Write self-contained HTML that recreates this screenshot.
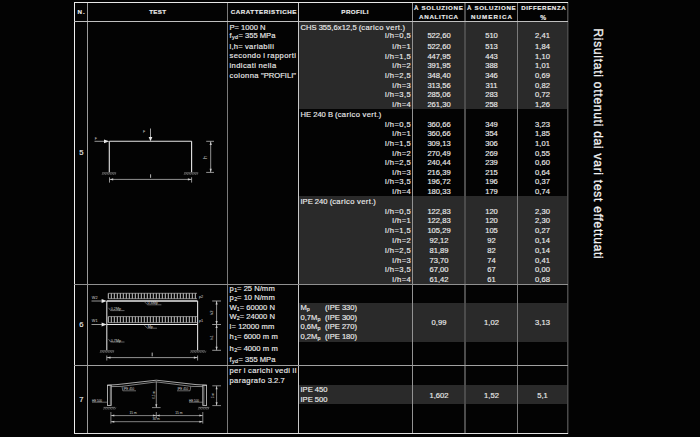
<!DOCTYPE html>
<html><head><meta charset="utf-8"><style>
html,body{margin:0;padding:0;}
body{width:700px;height:437px;background:#030303;position:relative;overflow:hidden;font-family:"Liberation Sans",sans-serif;color:#ececec;}
.t{position:absolute;white-space:nowrap;-webkit-text-stroke:0.15px #ececec;}
.lc{letter-spacing:0.4px;}
.t sub{font-size:70%;vertical-align:-0.25em;line-height:0;}
.band{position:absolute;background:#2a2a2a;}
.ln{position:absolute;}
svg{position:absolute;left:0;top:0;}
.rt{position:absolute;left:0;top:0;font-size:12px;line-height:12px;white-space:nowrap;color:#f4f4f4;transform-origin:0 0;}
</style></head><body>
<div class="band" style="left:299.0px;top:22.0px;width:268.0px;height:86.5px"></div><div class="band" style="left:299.0px;top:195.5px;width:268.0px;height:88.5px"></div><div class="band" style="left:299.0px;top:303.0px;width:268.0px;height:39.0px"></div><div class="band" style="left:299.0px;top:384.5px;width:268.0px;height:19.5px"></div>
<div class="ln" style="left:74px;top:2px;width:1px;height:432px;background:#eeeeee"></div><div class="ln" style="left:87px;top:2px;width:1px;height:432px;background:#9a9a9a"></div><div class="ln" style="left:227px;top:2px;width:1px;height:432px;background:#7a7a7a"></div><div class="ln" style="left:298px;top:2px;width:1px;height:432px;background:#c8c8c8"></div><div class="ln" style="left:412px;top:2px;width:1px;height:432px;background:#939393"></div><div class="ln" style="left:464px;top:2px;width:2px;height:432px;background:#4c4c4c"></div><div class="ln" style="left:517px;top:2px;width:1px;height:432px;background:#7a7a7a"></div><div class="ln" style="left:567px;top:2px;width:1px;height:432px;background:#4a4a4a"></div><div class="ln" style="left:568px;top:2px;width:1px;height:432px;background:#262626"></div><div class="ln" style="left:74px;top:2px;width:494px;height:1px;background:#e8e8e8"></div><div class="ln" style="left:74px;top:21px;width:494px;height:1px;background:#c0c0c0"></div><div class="ln" style="left:74px;top:284px;width:494px;height:1px;background:#909090"></div><div class="ln" style="left:74px;top:365px;width:494px;height:1px;background:#a0a0a0"></div><div class="ln" style="left:74px;top:433px;width:494px;height:1px;background:#e0e0e0"></div>
<svg width="700" height="437" viewBox="0 0 700 437"><line x1="109.3" y1="141.3" x2="191.6" y2="141.3" stroke="#e6e6e6" stroke-width="1.1" />
<line x1="109.3" y1="141.3" x2="109.3" y2="172.2" stroke="#e6e6e6" stroke-width="1.1" />
<line x1="191.6" y1="141.3" x2="191.6" y2="172.2" stroke="#e6e6e6" stroke-width="1.1" />
<line x1="102" y1="172.8" x2="116" y2="172.8" stroke="#808080" stroke-width="0.7" />
<line x1="102" y1="175.0" x2="103.2" y2="172.8" stroke="#808080" stroke-width="0.6" />
<line x1="103.6" y1="175.0" x2="104.8" y2="172.8" stroke="#808080" stroke-width="0.6" />
<line x1="105.19999999999999" y1="175.0" x2="106.39999999999999" y2="172.8" stroke="#808080" stroke-width="0.6" />
<line x1="106.79999999999998" y1="175.0" x2="107.99999999999999" y2="172.8" stroke="#808080" stroke-width="0.6" />
<line x1="108.39999999999998" y1="175.0" x2="109.59999999999998" y2="172.8" stroke="#808080" stroke-width="0.6" />
<line x1="109.99999999999997" y1="175.0" x2="111.19999999999997" y2="172.8" stroke="#808080" stroke-width="0.6" />
<line x1="111.59999999999997" y1="175.0" x2="112.79999999999997" y2="172.8" stroke="#808080" stroke-width="0.6" />
<line x1="113.19999999999996" y1="175.0" x2="114.39999999999996" y2="172.8" stroke="#808080" stroke-width="0.6" />
<line x1="114.79999999999995" y1="175.0" x2="115.99999999999996" y2="172.8" stroke="#808080" stroke-width="0.6" />
<line x1="184" y1="172.8" x2="198.2" y2="172.8" stroke="#808080" stroke-width="0.7" />
<line x1="184" y1="175.0" x2="185.2" y2="172.8" stroke="#808080" stroke-width="0.6" />
<line x1="185.6" y1="175.0" x2="186.79999999999998" y2="172.8" stroke="#808080" stroke-width="0.6" />
<line x1="187.2" y1="175.0" x2="188.39999999999998" y2="172.8" stroke="#808080" stroke-width="0.6" />
<line x1="188.79999999999998" y1="175.0" x2="189.99999999999997" y2="172.8" stroke="#808080" stroke-width="0.6" />
<line x1="190.39999999999998" y1="175.0" x2="191.59999999999997" y2="172.8" stroke="#808080" stroke-width="0.6" />
<line x1="191.99999999999997" y1="175.0" x2="193.19999999999996" y2="172.8" stroke="#808080" stroke-width="0.6" />
<line x1="193.59999999999997" y1="175.0" x2="194.79999999999995" y2="172.8" stroke="#808080" stroke-width="0.6" />
<line x1="195.19999999999996" y1="175.0" x2="196.39999999999995" y2="172.8" stroke="#808080" stroke-width="0.6" />
<line x1="196.79999999999995" y1="175.0" x2="197.99999999999994" y2="172.8" stroke="#808080" stroke-width="0.6" />
<line x1="94.5" y1="141.3" x2="104.5" y2="141.3" stroke="#a8a8a8" stroke-width="0.9" />
<polygon points="104,139.4 109.3,141.3 104,143.2" fill="#e8e8e8"/>
<text x="94.8" y="140.3" font-size="3.6" fill="#d8d8d8" font-family="Liberation Sans" text-anchor="start">F</text>
<line x1="150.5" y1="128.5" x2="150.5" y2="137.5" stroke="#b0b0b0" stroke-width="0.9" />
<polygon points="148.6,137 152.4,137 150.5,141.3" fill="#e8e8e8"/>
<text x="143" y="132.9" font-size="3.6" fill="#d8d8d8" font-family="Liberation Sans" text-anchor="start">F</text>
<line x1="210.7" y1="141.3" x2="210.7" y2="172.4" stroke="#b8b8b8" stroke-width="0.8" />
<line x1="206.2" y1="141.3" x2="214" y2="141.3" stroke="#b8b8b8" stroke-width="0.8" />
<line x1="206.2" y1="172.4" x2="214" y2="172.4" stroke="#b8b8b8" stroke-width="0.8" />
<polygon points="209.6,145 211.8,145 210.7,141.5" fill="#cfcfcf"/>
<polygon points="209.6,168.8 211.8,168.8 210.7,172.2" fill="#cfcfcf"/>
<text x="207.4" y="157.5" font-size="4.8" fill="#d8d8d8" font-family="Liberation Sans" text-anchor="middle" transform="rotate(-90 207.4 157.5)">h</text>
<line x1="109.5" y1="179.4" x2="191.6" y2="179.4" stroke="#b8b8b8" stroke-width="0.8" />
<line x1="109.5" y1="177.3" x2="109.5" y2="182.6" stroke="#b8b8b8" stroke-width="0.8" />
<line x1="191.6" y1="177.3" x2="191.6" y2="182.6" stroke="#b8b8b8" stroke-width="0.8" />
<polygon points="113.2,178.3 113.2,180.5 109.7,179.4" fill="#cfcfcf"/>
<polygon points="187.9,178.3 187.9,180.5 191.4,179.4" fill="#cfcfcf"/>
<line x1="150.6" y1="174.3" x2="150.6" y2="177.8" stroke="#c8c8c8" stroke-width="0.9" />
<line x1="108.3" y1="293.3" x2="197" y2="293.3" stroke="#b8b8b8" stroke-width="0.7" />
<line x1="108.3" y1="298.7" x2="197" y2="298.7" stroke="#b8b8b8" stroke-width="0.7" />
<line x1="108.3" y1="293.3" x2="108.3" y2="298.7" stroke="#c8c8c8" stroke-width="1.0" />
<line x1="111.3" y1="293.3" x2="111.3" y2="298.7" stroke="#c8c8c8" stroke-width="1.0" />
<line x1="114.3" y1="293.3" x2="114.3" y2="298.7" stroke="#c8c8c8" stroke-width="1.0" />
<line x1="117.3" y1="293.3" x2="117.3" y2="298.7" stroke="#c8c8c8" stroke-width="1.0" />
<line x1="120.3" y1="293.3" x2="120.3" y2="298.7" stroke="#c8c8c8" stroke-width="1.0" />
<line x1="123.3" y1="293.3" x2="123.3" y2="298.7" stroke="#c8c8c8" stroke-width="1.0" />
<line x1="126.3" y1="293.3" x2="126.3" y2="298.7" stroke="#c8c8c8" stroke-width="1.0" />
<line x1="129.3" y1="293.3" x2="129.3" y2="298.7" stroke="#c8c8c8" stroke-width="1.0" />
<line x1="132.3" y1="293.3" x2="132.3" y2="298.7" stroke="#c8c8c8" stroke-width="1.0" />
<line x1="135.3" y1="293.3" x2="135.3" y2="298.7" stroke="#c8c8c8" stroke-width="1.0" />
<line x1="138.3" y1="293.3" x2="138.3" y2="298.7" stroke="#c8c8c8" stroke-width="1.0" />
<line x1="141.3" y1="293.3" x2="141.3" y2="298.7" stroke="#c8c8c8" stroke-width="1.0" />
<line x1="144.3" y1="293.3" x2="144.3" y2="298.7" stroke="#c8c8c8" stroke-width="1.0" />
<line x1="147.3" y1="293.3" x2="147.3" y2="298.7" stroke="#c8c8c8" stroke-width="1.0" />
<line x1="150.3" y1="293.3" x2="150.3" y2="298.7" stroke="#c8c8c8" stroke-width="1.0" />
<line x1="153.3" y1="293.3" x2="153.3" y2="298.7" stroke="#c8c8c8" stroke-width="1.0" />
<line x1="156.3" y1="293.3" x2="156.3" y2="298.7" stroke="#c8c8c8" stroke-width="1.0" />
<line x1="159.3" y1="293.3" x2="159.3" y2="298.7" stroke="#c8c8c8" stroke-width="1.0" />
<line x1="162.3" y1="293.3" x2="162.3" y2="298.7" stroke="#c8c8c8" stroke-width="1.0" />
<line x1="165.3" y1="293.3" x2="165.3" y2="298.7" stroke="#c8c8c8" stroke-width="1.0" />
<line x1="168.3" y1="293.3" x2="168.3" y2="298.7" stroke="#c8c8c8" stroke-width="1.0" />
<line x1="171.3" y1="293.3" x2="171.3" y2="298.7" stroke="#c8c8c8" stroke-width="1.0" />
<line x1="174.3" y1="293.3" x2="174.3" y2="298.7" stroke="#c8c8c8" stroke-width="1.0" />
<line x1="177.3" y1="293.3" x2="177.3" y2="298.7" stroke="#c8c8c8" stroke-width="1.0" />
<line x1="180.3" y1="293.3" x2="180.3" y2="298.7" stroke="#c8c8c8" stroke-width="1.0" />
<line x1="183.3" y1="293.3" x2="183.3" y2="298.7" stroke="#c8c8c8" stroke-width="1.0" />
<line x1="186.3" y1="293.3" x2="186.3" y2="298.7" stroke="#c8c8c8" stroke-width="1.0" />
<line x1="189.3" y1="293.3" x2="189.3" y2="298.7" stroke="#c8c8c8" stroke-width="1.0" />
<line x1="192.3" y1="293.3" x2="192.3" y2="298.7" stroke="#c8c8c8" stroke-width="1.0" />
<line x1="195.3" y1="293.3" x2="195.3" y2="298.7" stroke="#c8c8c8" stroke-width="1.0" />
<line x1="108.3" y1="316.6" x2="197" y2="316.6" stroke="#b8b8b8" stroke-width="0.7" />
<line x1="108.3" y1="322.6" x2="197" y2="322.6" stroke="#b8b8b8" stroke-width="0.7" />
<line x1="108.3" y1="316.6" x2="108.3" y2="322.6" stroke="#c8c8c8" stroke-width="1.0" />
<line x1="111.3" y1="316.6" x2="111.3" y2="322.6" stroke="#c8c8c8" stroke-width="1.0" />
<line x1="114.3" y1="316.6" x2="114.3" y2="322.6" stroke="#c8c8c8" stroke-width="1.0" />
<line x1="117.3" y1="316.6" x2="117.3" y2="322.6" stroke="#c8c8c8" stroke-width="1.0" />
<line x1="120.3" y1="316.6" x2="120.3" y2="322.6" stroke="#c8c8c8" stroke-width="1.0" />
<line x1="123.3" y1="316.6" x2="123.3" y2="322.6" stroke="#c8c8c8" stroke-width="1.0" />
<line x1="126.3" y1="316.6" x2="126.3" y2="322.6" stroke="#c8c8c8" stroke-width="1.0" />
<line x1="129.3" y1="316.6" x2="129.3" y2="322.6" stroke="#c8c8c8" stroke-width="1.0" />
<line x1="132.3" y1="316.6" x2="132.3" y2="322.6" stroke="#c8c8c8" stroke-width="1.0" />
<line x1="135.3" y1="316.6" x2="135.3" y2="322.6" stroke="#c8c8c8" stroke-width="1.0" />
<line x1="138.3" y1="316.6" x2="138.3" y2="322.6" stroke="#c8c8c8" stroke-width="1.0" />
<line x1="141.3" y1="316.6" x2="141.3" y2="322.6" stroke="#c8c8c8" stroke-width="1.0" />
<line x1="144.3" y1="316.6" x2="144.3" y2="322.6" stroke="#c8c8c8" stroke-width="1.0" />
<line x1="147.3" y1="316.6" x2="147.3" y2="322.6" stroke="#c8c8c8" stroke-width="1.0" />
<line x1="150.3" y1="316.6" x2="150.3" y2="322.6" stroke="#c8c8c8" stroke-width="1.0" />
<line x1="153.3" y1="316.6" x2="153.3" y2="322.6" stroke="#c8c8c8" stroke-width="1.0" />
<line x1="156.3" y1="316.6" x2="156.3" y2="322.6" stroke="#c8c8c8" stroke-width="1.0" />
<line x1="159.3" y1="316.6" x2="159.3" y2="322.6" stroke="#c8c8c8" stroke-width="1.0" />
<line x1="162.3" y1="316.6" x2="162.3" y2="322.6" stroke="#c8c8c8" stroke-width="1.0" />
<line x1="165.3" y1="316.6" x2="165.3" y2="322.6" stroke="#c8c8c8" stroke-width="1.0" />
<line x1="168.3" y1="316.6" x2="168.3" y2="322.6" stroke="#c8c8c8" stroke-width="1.0" />
<line x1="171.3" y1="316.6" x2="171.3" y2="322.6" stroke="#c8c8c8" stroke-width="1.0" />
<line x1="174.3" y1="316.6" x2="174.3" y2="322.6" stroke="#c8c8c8" stroke-width="1.0" />
<line x1="177.3" y1="316.6" x2="177.3" y2="322.6" stroke="#c8c8c8" stroke-width="1.0" />
<line x1="180.3" y1="316.6" x2="180.3" y2="322.6" stroke="#c8c8c8" stroke-width="1.0" />
<line x1="183.3" y1="316.6" x2="183.3" y2="322.6" stroke="#c8c8c8" stroke-width="1.0" />
<line x1="186.3" y1="316.6" x2="186.3" y2="322.6" stroke="#c8c8c8" stroke-width="1.0" />
<line x1="189.3" y1="316.6" x2="189.3" y2="322.6" stroke="#c8c8c8" stroke-width="1.0" />
<line x1="192.3" y1="316.6" x2="192.3" y2="322.6" stroke="#c8c8c8" stroke-width="1.0" />
<line x1="195.3" y1="316.6" x2="195.3" y2="322.6" stroke="#c8c8c8" stroke-width="1.0" />
<line x1="106.8" y1="301" x2="197.6" y2="301" stroke="#eaeaea" stroke-width="1.3" />
<line x1="106.8" y1="324.5" x2="197.6" y2="324.5" stroke="#eaeaea" stroke-width="1.2" />
<line x1="106.8" y1="301" x2="106.8" y2="350.3" stroke="#dcdcdc" stroke-width="1.1" />
<line x1="197.6" y1="301" x2="197.6" y2="350.3" stroke="#dcdcdc" stroke-width="1.1" />
<line x1="100" y1="350.8" x2="114" y2="350.8" stroke="#808080" stroke-width="0.7" />
<line x1="100" y1="353.0" x2="101.2" y2="350.8" stroke="#808080" stroke-width="0.6" />
<line x1="101.6" y1="353.0" x2="102.8" y2="350.8" stroke="#808080" stroke-width="0.6" />
<line x1="103.19999999999999" y1="353.0" x2="104.39999999999999" y2="350.8" stroke="#808080" stroke-width="0.6" />
<line x1="104.79999999999998" y1="353.0" x2="105.99999999999999" y2="350.8" stroke="#808080" stroke-width="0.6" />
<line x1="106.39999999999998" y1="353.0" x2="107.59999999999998" y2="350.8" stroke="#808080" stroke-width="0.6" />
<line x1="107.99999999999997" y1="353.0" x2="109.19999999999997" y2="350.8" stroke="#808080" stroke-width="0.6" />
<line x1="109.59999999999997" y1="353.0" x2="110.79999999999997" y2="350.8" stroke="#808080" stroke-width="0.6" />
<line x1="111.19999999999996" y1="353.0" x2="112.39999999999996" y2="350.8" stroke="#808080" stroke-width="0.6" />
<line x1="112.79999999999995" y1="353.0" x2="113.99999999999996" y2="350.8" stroke="#808080" stroke-width="0.6" />
<line x1="190.5" y1="350.8" x2="205" y2="350.8" stroke="#808080" stroke-width="0.7" />
<line x1="190.5" y1="353.0" x2="191.7" y2="350.8" stroke="#808080" stroke-width="0.6" />
<line x1="192.1" y1="353.0" x2="193.29999999999998" y2="350.8" stroke="#808080" stroke-width="0.6" />
<line x1="193.7" y1="353.0" x2="194.89999999999998" y2="350.8" stroke="#808080" stroke-width="0.6" />
<line x1="195.29999999999998" y1="353.0" x2="196.49999999999997" y2="350.8" stroke="#808080" stroke-width="0.6" />
<line x1="196.89999999999998" y1="353.0" x2="198.09999999999997" y2="350.8" stroke="#808080" stroke-width="0.6" />
<line x1="198.49999999999997" y1="353.0" x2="199.69999999999996" y2="350.8" stroke="#808080" stroke-width="0.6" />
<line x1="200.09999999999997" y1="353.0" x2="201.29999999999995" y2="350.8" stroke="#808080" stroke-width="0.6" />
<line x1="201.69999999999996" y1="353.0" x2="202.89999999999995" y2="350.8" stroke="#808080" stroke-width="0.6" />
<line x1="203.29999999999995" y1="353.0" x2="204.49999999999994" y2="350.8" stroke="#808080" stroke-width="0.6" />
<line x1="204.89999999999995" y1="353.0" x2="206.09999999999994" y2="350.8" stroke="#808080" stroke-width="0.6" />
<line x1="91.5" y1="301" x2="102" y2="301" stroke="#a8a8a8" stroke-width="0.9" />
<polygon points="101.6,299 106.8,301 101.6,303" fill="#e8e8e8"/>
<text x="91.8" y="298.6" font-size="3.8" fill="#d8d8d8" font-family="Liberation Sans" text-anchor="start">W2</text>
<line x1="91.5" y1="324.5" x2="102" y2="324.5" stroke="#a8a8a8" stroke-width="0.9" />
<polygon points="101.6,322.5 106.8,324.5 101.6,326.5" fill="#e8e8e8"/>
<text x="91.8" y="322.1" font-size="3.8" fill="#d8d8d8" font-family="Liberation Sans" text-anchor="start">W1</text>
<text x="199" y="297.8" font-size="3.8" fill="#d8d8d8" font-family="Liberation Sans" text-anchor="start">p2</text>
<text x="199" y="321.6" font-size="3.8" fill="#d8d8d8" font-family="Liberation Sans" text-anchor="start">p1</text>
<line x1="108.5" y1="307.8" x2="110.6" y2="310.6" stroke="#a0a0a0" stroke-width="0.6" />
<line x1="110.6" y1="310.6" x2="124.5" y2="310.6" stroke="#a0a0a0" stroke-width="0.6" />
<text x="110.8" y="310.1" font-size="3.7" fill="#d8d8d8" font-family="Liberation Sans" text-anchor="start">0,2Mp</text>
<line x1="108.5" y1="339.2" x2="110.6" y2="342" stroke="#a0a0a0" stroke-width="0.6" />
<line x1="110.6" y1="342" x2="124.5" y2="342" stroke="#a0a0a0" stroke-width="0.6" />
<text x="110.8" y="341.5" font-size="3.7" fill="#d8d8d8" font-family="Liberation Sans" text-anchor="start">0,7Mp</text>
<line x1="144.3" y1="301.6" x2="147.5" y2="304.8" stroke="#a0a0a0" stroke-width="0.6" />
<line x1="147.5" y1="304.8" x2="161.4" y2="304.8" stroke="#a0a0a0" stroke-width="0.6" />
<text x="147.6" y="304.2" font-size="3.7" fill="#d8d8d8" font-family="Liberation Sans" text-anchor="start">0,6Mp</text>
<line x1="144.3" y1="325.2" x2="147.5" y2="328.2" stroke="#a0a0a0" stroke-width="0.6" />
<line x1="147.5" y1="328.2" x2="157" y2="328.2" stroke="#a0a0a0" stroke-width="0.6" />
<text x="147.8" y="327.7" font-size="3.7" fill="#d8d8d8" font-family="Liberation Sans" text-anchor="start">Mp</text>
<line x1="216.6" y1="301" x2="216.6" y2="350.3" stroke="#b8b8b8" stroke-width="0.8" />
<line x1="212.2" y1="301" x2="221" y2="301" stroke="#b8b8b8" stroke-width="0.8" />
<line x1="212.2" y1="324.5" x2="221" y2="324.5" stroke="#b8b8b8" stroke-width="0.8" />
<line x1="212.2" y1="350.3" x2="221" y2="350.3" stroke="#b8b8b8" stroke-width="0.8" />
<polygon points="215.5,304.6 217.7,304.6 216.6,301.2" fill="#cfcfcf"/>
<polygon points="215.5,320.9 217.7,320.9 216.6,324.3" fill="#cfcfcf"/>
<polygon points="215.5,328.1 217.7,328.1 216.6,324.7" fill="#cfcfcf"/>
<polygon points="215.5,346.7 217.7,346.7 216.6,350.1" fill="#cfcfcf"/>
<text x="213" y="312.8" font-size="4.0" fill="#d8d8d8" font-family="Liberation Sans" text-anchor="middle" transform="rotate(-90 213 312.8)">h2</text>
<text x="213" y="337.5" font-size="4.0" fill="#d8d8d8" font-family="Liberation Sans" text-anchor="middle" transform="rotate(-90 213 337.5)">h1</text>
<line x1="106.8" y1="357.6" x2="197.6" y2="357.6" stroke="#b8b8b8" stroke-width="0.8" />
<line x1="106.8" y1="355.5" x2="106.8" y2="360.5" stroke="#b8b8b8" stroke-width="0.8" />
<line x1="197.6" y1="355.5" x2="197.6" y2="360.5" stroke="#b8b8b8" stroke-width="0.8" />
<polygon points="110.5,356.5 110.5,358.7 107,357.6" fill="#cfcfcf"/>
<polygon points="193.9,356.5 193.9,358.7 197.4,357.6" fill="#cfcfcf"/>
<line x1="152.2" y1="352.6" x2="152.2" y2="356.3" stroke="#c8c8c8" stroke-width="0.9" />
<rect x="107.4" y="385.2" width="3.8" height="20.3" fill="none" stroke="#d0d0d0" stroke-width="0.8"/>
<rect x="202.8" y="385.2" width="3.8" height="20.3" fill="none" stroke="#d0d0d0" stroke-width="0.8"/>
<line x1="110.3" y1="386" x2="110.3" y2="405" stroke="#bdbdbd" stroke-width="0.6" />
<line x1="203.9" y1="386" x2="203.9" y2="405" stroke="#bdbdbd" stroke-width="0.6" />
<polyline points="107.4,385.2 117,384.6 135,382.6 156.3,380.2 178,382.6 196,384.6 206.6,385.2" fill="none" stroke="#d0d0d0" stroke-width="0.8"/>
<polyline points="111.2,386.6 121.5,386.4 140,384.0 156.3,381.9 173,384.0 191.5,386.4 202.8,386.6" fill="none" stroke="#b8b8b8" stroke-width="0.7"/>
<line x1="103.5" y1="407.4" x2="115" y2="407.4" stroke="#888" stroke-width="0.7" />
<line x1="103.5" y1="409.59999999999997" x2="104.7" y2="407.4" stroke="#888" stroke-width="0.6" />
<line x1="105.1" y1="409.59999999999997" x2="106.3" y2="407.4" stroke="#888" stroke-width="0.6" />
<line x1="106.69999999999999" y1="409.59999999999997" x2="107.89999999999999" y2="407.4" stroke="#888" stroke-width="0.6" />
<line x1="108.29999999999998" y1="409.59999999999997" x2="109.49999999999999" y2="407.4" stroke="#888" stroke-width="0.6" />
<line x1="109.89999999999998" y1="409.59999999999997" x2="111.09999999999998" y2="407.4" stroke="#888" stroke-width="0.6" />
<line x1="111.49999999999997" y1="409.59999999999997" x2="112.69999999999997" y2="407.4" stroke="#888" stroke-width="0.6" />
<line x1="113.09999999999997" y1="409.59999999999997" x2="114.29999999999997" y2="407.4" stroke="#888" stroke-width="0.6" />
<line x1="114.69999999999996" y1="409.59999999999997" x2="115.89999999999996" y2="407.4" stroke="#888" stroke-width="0.6" />
<line x1="198.3" y1="407.4" x2="209" y2="407.4" stroke="#888" stroke-width="0.7" />
<line x1="198.3" y1="409.59999999999997" x2="199.5" y2="407.4" stroke="#888" stroke-width="0.6" />
<line x1="199.9" y1="409.59999999999997" x2="201.1" y2="407.4" stroke="#888" stroke-width="0.6" />
<line x1="201.5" y1="409.59999999999997" x2="202.7" y2="407.4" stroke="#888" stroke-width="0.6" />
<line x1="203.1" y1="409.59999999999997" x2="204.29999999999998" y2="407.4" stroke="#888" stroke-width="0.6" />
<line x1="204.7" y1="409.59999999999997" x2="205.89999999999998" y2="407.4" stroke="#888" stroke-width="0.6" />
<line x1="206.29999999999998" y1="409.59999999999997" x2="207.49999999999997" y2="407.4" stroke="#888" stroke-width="0.6" />
<line x1="207.89999999999998" y1="409.59999999999997" x2="209.09999999999997" y2="407.4" stroke="#888" stroke-width="0.6" />
<line x1="122" y1="386.5" x2="122.8" y2="390.8" stroke="#aaa" stroke-width="0.6" />
<line x1="122.8" y1="390.8" x2="136" y2="390.8" stroke="#aaa" stroke-width="0.6" />
<text x="123.5" y="390.3" font-size="3.0" fill="#d8d8d8" font-family="Liberation Sans" text-anchor="start">IPE 450</text>
<line x1="190.8" y1="386.5" x2="190" y2="390.8" stroke="#aaa" stroke-width="0.6" />
<line x1="177" y1="390.8" x2="190" y2="390.8" stroke="#aaa" stroke-width="0.6" />
<text x="177.5" y="390.3" font-size="3.0" fill="#d8d8d8" font-family="Liberation Sans" text-anchor="start">IPE 450</text>
<line x1="92" y1="402.2" x2="107.4" y2="402.2" stroke="#aaa" stroke-width="0.6" />
<text x="92" y="401.6" font-size="3.0" fill="#d8d8d8" font-family="Liberation Sans" text-anchor="start">HE 500</text>
<line x1="189" y1="402.2" x2="202.8" y2="402.2" stroke="#aaa" stroke-width="0.6" />
<text x="189" y="401.6" font-size="3.0" fill="#d8d8d8" font-family="Liberation Sans" text-anchor="start">HE 500</text>
<line x1="156.3" y1="381.5" x2="156.3" y2="407.6" stroke="#b8b8b8" stroke-width="0.7" />
<line x1="152" y1="407.6" x2="160.6" y2="407.6" stroke="#b8b8b8" stroke-width="0.7" />
<polygon points="155.3,404.2 157.3,404.2 156.3,407.4" fill="#cfcfcf"/>
<text x="154.8" y="395" font-size="3.0" fill="#d8d8d8" font-family="Liberation Sans" text-anchor="middle" transform="rotate(-90 154.8 395)">6,5 m</text>
<line x1="216.6" y1="385.8" x2="216.6" y2="405.6" stroke="#b8b8b8" stroke-width="0.7" />
<line x1="212.3" y1="385.8" x2="221" y2="385.8" stroke="#b8b8b8" stroke-width="0.7" />
<line x1="212.3" y1="405.6" x2="221" y2="405.6" stroke="#b8b8b8" stroke-width="0.7" />
<polygon points="215.6,389.2 217.6,389.2 216.6,386" fill="#cfcfcf"/>
<polygon points="215.6,402.2 217.6,402.2 216.6,405.4" fill="#cfcfcf"/>
<text x="214.3" y="395.5" font-size="3.0" fill="#d8d8d8" font-family="Liberation Sans" text-anchor="middle" transform="rotate(-90 214.3 395.5)">5 m</text>
<line x1="110.9" y1="412" x2="110.9" y2="423.6" stroke="#b8b8b8" stroke-width="0.7" />
<line x1="202.8" y1="412" x2="202.8" y2="423.6" stroke="#b8b8b8" stroke-width="0.7" />
<line x1="156.3" y1="412" x2="156.3" y2="418.2" stroke="#b8b8b8" stroke-width="0.7" />
<line x1="110.9" y1="415.6" x2="202.8" y2="415.6" stroke="#b8b8b8" stroke-width="0.7" />
<line x1="110.9" y1="421.7" x2="202.8" y2="421.7" stroke="#b8b8b8" stroke-width="0.7" />
<polygon points="114.3,414.6 114.3,416.6 111.1,415.6" fill="#cfcfcf"/>
<polygon points="199.4,414.6 199.4,416.6 202.6,415.6" fill="#cfcfcf"/>
<polygon points="114.3,420.7 114.3,422.7 111.1,421.7" fill="#cfcfcf"/>
<polygon points="199.4,420.7 199.4,422.7 202.6,421.7" fill="#cfcfcf"/>
<polygon points="152.9,414.6 152.9,416.6 156.1,415.6" fill="#cfcfcf"/>
<polygon points="159.7,414.6 159.7,416.6 156.5,415.6" fill="#cfcfcf"/>
<text x="129.5" y="414.3" font-size="3.3" fill="#d8d8d8" font-family="Liberation Sans" text-anchor="start">15 m</text>
<text x="175.2" y="414.3" font-size="3.3" fill="#d8d8d8" font-family="Liberation Sans" text-anchor="start">15 m</text>
<text x="152.4" y="420.4" font-size="3.3" fill="#d8d8d8" font-family="Liberation Sans" text-anchor="start">30 m</text></svg>
<div class="t" style="left:-68.40px;top:9.17px;width:300px;font-size:6.2px;line-height:6.2px;text-align:center;font-weight:bold;letter-spacing:1.0px;">N.</div><div class="t" style="left:7.75px;top:9.17px;width:300px;font-size:6.2px;line-height:6.2px;text-align:center;font-weight:bold;letter-spacing:0.3px;">TEST</div><div class="t" style="left:113.88px;top:9.17px;width:300px;font-size:6.2px;line-height:6.2px;text-align:center;font-weight:bold;letter-spacing:0.55px;">CARATTERISTICHE</div><div class="t" style="left:205.12px;top:9.17px;width:300px;font-size:6.2px;line-height:6.2px;text-align:center;font-weight:bold;letter-spacing:0.45px;">PROFILI</div><div class="t" style="left:288.72px;top:5.47px;width:300px;font-size:6.2px;line-height:6.2px;text-align:center;font-weight:bold;letter-spacing:0.65px;">&Agrave; SOLUZIONE</div><div class="t" style="left:288.95px;top:14.37px;width:300px;font-size:6.2px;line-height:6.2px;text-align:center;font-weight:bold;letter-spacing:0.7px;">ANALITICA</div><div class="t" style="left:341.62px;top:5.47px;width:300px;font-size:6.2px;line-height:6.2px;text-align:center;font-weight:bold;letter-spacing:0.65px;">&Agrave; SOLUZIONE</div><div class="t" style="left:342.05px;top:14.37px;width:300px;font-size:6.2px;line-height:6.2px;text-align:center;font-weight:bold;letter-spacing:1.1px;">NUMERICA</div><div class="t" style="left:393.80px;top:5.47px;width:300px;font-size:6.2px;line-height:6.2px;text-align:center;font-weight:bold;letter-spacing:0.6px;">DIFFERENZA</div><div class="t" style="left:393.20px;top:14.78px;width:300px;font-size:6.6000000000000005px;line-height:6.6000000000000005px;text-align:center;font-weight:bold;">%</div><div class="t" style="left:-68.70px;top:148.79px;width:300px;font-size:7.6px;line-height:7.6px;text-align:center;">5</div><div class="t" style="left:-68.70px;top:320.79px;width:300px;font-size:7.6px;line-height:7.6px;text-align:center;">6</div><div class="t" style="left:-68.70px;top:395.79px;width:300px;font-size:7.6px;line-height:7.6px;text-align:center;">7</div><div class="t" style="left:229.50px;top:23.79px;width:300px;font-size:7.6px;line-height:7.6px;text-align:left;">P= 1000 N</div><div class="t" style="left:229.50px;top:32.09px;width:300px;font-size:7.6px;line-height:7.6px;text-align:left;"><span class="lc">f</span><sub><span class="lc">yd</span></sub>= 355 MP<span class="lc">a</span></div><div class="t" style="left:229.50px;top:42.79px;width:300px;font-size:7.6px;line-height:7.6px;text-align:left;"><span class="lc">l</span>,<span class="lc">h</span>= <span class="lc">variabili</span></div><div class="t" style="left:229.50px;top:52.49px;width:300px;font-size:7.6px;line-height:7.6px;text-align:left;"><span class="lc">secondo</span> <span class="lc">i</span> <span class="lc">rapporti</span></div><div class="t" style="left:229.50px;top:62.29px;width:300px;font-size:7.6px;line-height:7.6px;text-align:left;"><span class="lc">indicati</span> <span class="lc">nella</span></div><div class="t" style="left:229.50px;top:71.79px;width:300px;font-size:7.6px;line-height:7.6px;text-align:left;"><span class="lc">colonna</span> "PROFILI"</div><div class="t" style="left:300.50px;top:24.29px;width:300px;font-size:7.6px;line-height:7.6px;text-align:left;">CHS 355,6<span class="lc">x</span>12,5 (<span class="lc">carico</span> <span class="lc">vert</span>.)</div><div class="t" style="left:111.20px;top:32.09px;width:300px;font-size:7.6px;line-height:7.6px;text-align:right;letter-spacing:0.45px;"><span class="lc">l</span>/<span class="lc">h</span>=0,5</div><div class="t" style="left:289.00px;top:32.09px;width:300px;font-size:7.6px;line-height:7.6px;text-align:center;">522,60</div><div class="t" style="left:341.50px;top:32.09px;width:300px;font-size:7.6px;line-height:7.6px;text-align:center;">510</div><div class="t" style="left:392.50px;top:32.09px;width:300px;font-size:7.6px;line-height:7.6px;text-align:center;">2,41</div><div class="t" style="left:111.20px;top:42.79px;width:300px;font-size:7.6px;line-height:7.6px;text-align:right;letter-spacing:0.45px;"><span class="lc">l</span>/<span class="lc">h</span>=1</div><div class="t" style="left:289.00px;top:42.79px;width:300px;font-size:7.6px;line-height:7.6px;text-align:center;">522,60</div><div class="t" style="left:341.50px;top:42.79px;width:300px;font-size:7.6px;line-height:7.6px;text-align:center;">513</div><div class="t" style="left:392.50px;top:42.79px;width:300px;font-size:7.6px;line-height:7.6px;text-align:center;">1,84</div><div class="t" style="left:111.20px;top:52.79px;width:300px;font-size:7.6px;line-height:7.6px;text-align:right;letter-spacing:0.45px;"><span class="lc">l</span>/<span class="lc">h</span>=1,5</div><div class="t" style="left:289.00px;top:52.79px;width:300px;font-size:7.6px;line-height:7.6px;text-align:center;">447,95</div><div class="t" style="left:341.50px;top:52.79px;width:300px;font-size:7.6px;line-height:7.6px;text-align:center;">443</div><div class="t" style="left:392.50px;top:52.79px;width:300px;font-size:7.6px;line-height:7.6px;text-align:center;">1,10</div><div class="t" style="left:111.20px;top:62.29px;width:300px;font-size:7.6px;line-height:7.6px;text-align:right;letter-spacing:0.45px;"><span class="lc">l</span>/<span class="lc">h</span>=2</div><div class="t" style="left:289.00px;top:62.29px;width:300px;font-size:7.6px;line-height:7.6px;text-align:center;">391,95</div><div class="t" style="left:341.50px;top:62.29px;width:300px;font-size:7.6px;line-height:7.6px;text-align:center;">388</div><div class="t" style="left:392.50px;top:62.29px;width:300px;font-size:7.6px;line-height:7.6px;text-align:center;">1,01</div><div class="t" style="left:111.20px;top:71.79px;width:300px;font-size:7.6px;line-height:7.6px;text-align:right;letter-spacing:0.45px;"><span class="lc">l</span>/<span class="lc">h</span>=2,5</div><div class="t" style="left:289.00px;top:71.79px;width:300px;font-size:7.6px;line-height:7.6px;text-align:center;">348,40</div><div class="t" style="left:341.50px;top:71.79px;width:300px;font-size:7.6px;line-height:7.6px;text-align:center;">346</div><div class="t" style="left:392.50px;top:71.79px;width:300px;font-size:7.6px;line-height:7.6px;text-align:center;">0,69</div><div class="t" style="left:111.20px;top:81.79px;width:300px;font-size:7.6px;line-height:7.6px;text-align:right;letter-spacing:0.45px;"><span class="lc">l</span>/<span class="lc">h</span>=3</div><div class="t" style="left:289.00px;top:81.79px;width:300px;font-size:7.6px;line-height:7.6px;text-align:center;">313,56</div><div class="t" style="left:341.50px;top:81.79px;width:300px;font-size:7.6px;line-height:7.6px;text-align:center;">311</div><div class="t" style="left:392.50px;top:81.79px;width:300px;font-size:7.6px;line-height:7.6px;text-align:center;">0,82</div><div class="t" style="left:111.20px;top:91.29px;width:300px;font-size:7.6px;line-height:7.6px;text-align:right;letter-spacing:0.45px;"><span class="lc">l</span>/<span class="lc">h</span>=3,5</div><div class="t" style="left:289.00px;top:91.29px;width:300px;font-size:7.6px;line-height:7.6px;text-align:center;">285,06</div><div class="t" style="left:341.50px;top:91.29px;width:300px;font-size:7.6px;line-height:7.6px;text-align:center;">283</div><div class="t" style="left:392.50px;top:91.29px;width:300px;font-size:7.6px;line-height:7.6px;text-align:center;">0,72</div><div class="t" style="left:111.20px;top:100.79px;width:300px;font-size:7.6px;line-height:7.6px;text-align:right;letter-spacing:0.45px;"><span class="lc">l</span>/<span class="lc">h</span>=4</div><div class="t" style="left:289.00px;top:100.79px;width:300px;font-size:7.6px;line-height:7.6px;text-align:center;">261,30</div><div class="t" style="left:341.50px;top:100.79px;width:300px;font-size:7.6px;line-height:7.6px;text-align:center;">258</div><div class="t" style="left:392.50px;top:100.79px;width:300px;font-size:7.6px;line-height:7.6px;text-align:center;">1,26</div><div class="t" style="left:300.50px;top:111.29px;width:300px;font-size:7.6px;line-height:7.6px;text-align:left;">HE 240 B (<span class="lc">carico</span> <span class="lc">vert</span>.)</div><div class="t" style="left:111.20px;top:120.79px;width:300px;font-size:7.6px;line-height:7.6px;text-align:right;letter-spacing:0.45px;"><span class="lc">l</span>/<span class="lc">h</span>=0,5</div><div class="t" style="left:289.00px;top:120.79px;width:300px;font-size:7.6px;line-height:7.6px;text-align:center;">360,66</div><div class="t" style="left:341.50px;top:120.79px;width:300px;font-size:7.6px;line-height:7.6px;text-align:center;">349</div><div class="t" style="left:392.50px;top:120.79px;width:300px;font-size:7.6px;line-height:7.6px;text-align:center;">3,23</div><div class="t" style="left:111.20px;top:130.49px;width:300px;font-size:7.6px;line-height:7.6px;text-align:right;letter-spacing:0.45px;"><span class="lc">l</span>/<span class="lc">h</span>=1</div><div class="t" style="left:289.00px;top:130.49px;width:300px;font-size:7.6px;line-height:7.6px;text-align:center;">360,66</div><div class="t" style="left:341.50px;top:130.49px;width:300px;font-size:7.6px;line-height:7.6px;text-align:center;">354</div><div class="t" style="left:392.50px;top:130.49px;width:300px;font-size:7.6px;line-height:7.6px;text-align:center;">1,85</div><div class="t" style="left:111.20px;top:140.09px;width:300px;font-size:7.6px;line-height:7.6px;text-align:right;letter-spacing:0.45px;"><span class="lc">l</span>/<span class="lc">h</span>=1,5</div><div class="t" style="left:289.00px;top:140.09px;width:300px;font-size:7.6px;line-height:7.6px;text-align:center;">309,13</div><div class="t" style="left:341.50px;top:140.09px;width:300px;font-size:7.6px;line-height:7.6px;text-align:center;">306</div><div class="t" style="left:392.50px;top:140.09px;width:300px;font-size:7.6px;line-height:7.6px;text-align:center;">1,01</div><div class="t" style="left:111.20px;top:149.79px;width:300px;font-size:7.6px;line-height:7.6px;text-align:right;letter-spacing:0.45px;"><span class="lc">l</span>/<span class="lc">h</span>=2</div><div class="t" style="left:289.00px;top:149.79px;width:300px;font-size:7.6px;line-height:7.6px;text-align:center;">270,49</div><div class="t" style="left:341.50px;top:149.79px;width:300px;font-size:7.6px;line-height:7.6px;text-align:center;">269</div><div class="t" style="left:392.50px;top:149.79px;width:300px;font-size:7.6px;line-height:7.6px;text-align:center;">0,55</div><div class="t" style="left:111.20px;top:159.29px;width:300px;font-size:7.6px;line-height:7.6px;text-align:right;letter-spacing:0.45px;"><span class="lc">l</span>/<span class="lc">h</span>=2,5</div><div class="t" style="left:289.00px;top:159.29px;width:300px;font-size:7.6px;line-height:7.6px;text-align:center;">240,44</div><div class="t" style="left:341.50px;top:159.29px;width:300px;font-size:7.6px;line-height:7.6px;text-align:center;">239</div><div class="t" style="left:392.50px;top:159.29px;width:300px;font-size:7.6px;line-height:7.6px;text-align:center;">0,60</div><div class="t" style="left:111.20px;top:168.79px;width:300px;font-size:7.6px;line-height:7.6px;text-align:right;letter-spacing:0.45px;"><span class="lc">l</span>/<span class="lc">h</span>=3</div><div class="t" style="left:289.00px;top:168.79px;width:300px;font-size:7.6px;line-height:7.6px;text-align:center;">216,39</div><div class="t" style="left:341.50px;top:168.79px;width:300px;font-size:7.6px;line-height:7.6px;text-align:center;">215</div><div class="t" style="left:392.50px;top:168.79px;width:300px;font-size:7.6px;line-height:7.6px;text-align:center;">0,64</div><div class="t" style="left:111.20px;top:178.29px;width:300px;font-size:7.6px;line-height:7.6px;text-align:right;letter-spacing:0.45px;"><span class="lc">l</span>/<span class="lc">h</span>=3,5</div><div class="t" style="left:289.00px;top:178.29px;width:300px;font-size:7.6px;line-height:7.6px;text-align:center;">196,72</div><div class="t" style="left:341.50px;top:178.29px;width:300px;font-size:7.6px;line-height:7.6px;text-align:center;">196</div><div class="t" style="left:392.50px;top:178.29px;width:300px;font-size:7.6px;line-height:7.6px;text-align:center;">0,37</div><div class="t" style="left:111.20px;top:187.79px;width:300px;font-size:7.6px;line-height:7.6px;text-align:right;letter-spacing:0.45px;"><span class="lc">l</span>/<span class="lc">h</span>=4</div><div class="t" style="left:289.00px;top:187.79px;width:300px;font-size:7.6px;line-height:7.6px;text-align:center;">180,33</div><div class="t" style="left:341.50px;top:187.79px;width:300px;font-size:7.6px;line-height:7.6px;text-align:center;">179</div><div class="t" style="left:392.50px;top:187.79px;width:300px;font-size:7.6px;line-height:7.6px;text-align:center;">0,74</div><div class="t" style="left:300.50px;top:197.79px;width:300px;font-size:7.6px;line-height:7.6px;text-align:left;">IPE 240 (<span class="lc">carico</span> <span class="lc">vert</span>.)</div><div class="t" style="left:111.20px;top:208.09px;width:300px;font-size:7.6px;line-height:7.6px;text-align:right;letter-spacing:0.45px;"><span class="lc">l</span>/<span class="lc">h</span>=0,5</div><div class="t" style="left:289.00px;top:208.09px;width:300px;font-size:7.6px;line-height:7.6px;text-align:center;">122,83</div><div class="t" style="left:341.50px;top:208.09px;width:300px;font-size:7.6px;line-height:7.6px;text-align:center;">120</div><div class="t" style="left:392.50px;top:208.09px;width:300px;font-size:7.6px;line-height:7.6px;text-align:center;">2,30</div><div class="t" style="left:111.20px;top:217.29px;width:300px;font-size:7.6px;line-height:7.6px;text-align:right;letter-spacing:0.45px;"><span class="lc">l</span>/<span class="lc">h</span>=1</div><div class="t" style="left:289.00px;top:217.29px;width:300px;font-size:7.6px;line-height:7.6px;text-align:center;">122,83</div><div class="t" style="left:341.50px;top:217.29px;width:300px;font-size:7.6px;line-height:7.6px;text-align:center;">120</div><div class="t" style="left:392.50px;top:217.29px;width:300px;font-size:7.6px;line-height:7.6px;text-align:center;">2,30</div><div class="t" style="left:111.20px;top:227.29px;width:300px;font-size:7.6px;line-height:7.6px;text-align:right;letter-spacing:0.45px;"><span class="lc">l</span>/<span class="lc">h</span>=1,5</div><div class="t" style="left:289.00px;top:227.29px;width:300px;font-size:7.6px;line-height:7.6px;text-align:center;">105,29</div><div class="t" style="left:341.50px;top:227.29px;width:300px;font-size:7.6px;line-height:7.6px;text-align:center;">105</div><div class="t" style="left:392.50px;top:227.29px;width:300px;font-size:7.6px;line-height:7.6px;text-align:center;">0,27</div><div class="t" style="left:111.20px;top:237.29px;width:300px;font-size:7.6px;line-height:7.6px;text-align:right;letter-spacing:0.45px;"><span class="lc">l</span>/<span class="lc">h</span>=2</div><div class="t" style="left:289.00px;top:237.29px;width:300px;font-size:7.6px;line-height:7.6px;text-align:center;">92,12</div><div class="t" style="left:341.50px;top:237.29px;width:300px;font-size:7.6px;line-height:7.6px;text-align:center;">92</div><div class="t" style="left:392.50px;top:237.29px;width:300px;font-size:7.6px;line-height:7.6px;text-align:center;">0,14</div><div class="t" style="left:111.20px;top:247.09px;width:300px;font-size:7.6px;line-height:7.6px;text-align:right;letter-spacing:0.45px;"><span class="lc">l</span>/<span class="lc">h</span>=2,5</div><div class="t" style="left:289.00px;top:247.09px;width:300px;font-size:7.6px;line-height:7.6px;text-align:center;">81,89</div><div class="t" style="left:341.50px;top:247.09px;width:300px;font-size:7.6px;line-height:7.6px;text-align:center;">82</div><div class="t" style="left:392.50px;top:247.09px;width:300px;font-size:7.6px;line-height:7.6px;text-align:center;">0,14</div><div class="t" style="left:111.20px;top:256.79px;width:300px;font-size:7.6px;line-height:7.6px;text-align:right;letter-spacing:0.45px;"><span class="lc">l</span>/<span class="lc">h</span>=3</div><div class="t" style="left:289.00px;top:256.79px;width:300px;font-size:7.6px;line-height:7.6px;text-align:center;">73,70</div><div class="t" style="left:341.50px;top:256.79px;width:300px;font-size:7.6px;line-height:7.6px;text-align:center;">74</div><div class="t" style="left:392.50px;top:256.79px;width:300px;font-size:7.6px;line-height:7.6px;text-align:center;">0,41</div><div class="t" style="left:111.20px;top:266.29px;width:300px;font-size:7.6px;line-height:7.6px;text-align:right;letter-spacing:0.45px;"><span class="lc">l</span>/<span class="lc">h</span>=3,5</div><div class="t" style="left:289.00px;top:266.29px;width:300px;font-size:7.6px;line-height:7.6px;text-align:center;">67,00</div><div class="t" style="left:341.50px;top:266.29px;width:300px;font-size:7.6px;line-height:7.6px;text-align:center;">67</div><div class="t" style="left:392.50px;top:266.29px;width:300px;font-size:7.6px;line-height:7.6px;text-align:center;">0,00</div><div class="t" style="left:111.20px;top:275.79px;width:300px;font-size:7.6px;line-height:7.6px;text-align:right;letter-spacing:0.45px;"><span class="lc">l</span>/<span class="lc">h</span>=4</div><div class="t" style="left:289.00px;top:275.79px;width:300px;font-size:7.6px;line-height:7.6px;text-align:center;">61,42</div><div class="t" style="left:341.50px;top:275.79px;width:300px;font-size:7.6px;line-height:7.6px;text-align:center;">61</div><div class="t" style="left:392.50px;top:275.79px;width:300px;font-size:7.6px;line-height:7.6px;text-align:center;">0,68</div><div class="t" style="left:229.50px;top:285.29px;width:300px;font-size:7.6px;line-height:7.6px;text-align:left;"><span class="lc">p</span><sub>1</sub>= 25 N/<span class="lc">mm</span></div><div class="t" style="left:229.50px;top:294.29px;width:300px;font-size:7.6px;line-height:7.6px;text-align:left;"><span class="lc">p</span><sub>2</sub>= 10 N/<span class="lc">mm</span></div><div class="t" style="left:229.50px;top:303.79px;width:300px;font-size:7.6px;line-height:7.6px;text-align:left;">W<sub>1</sub>= 60000 N</div><div class="t" style="left:229.50px;top:313.29px;width:300px;font-size:7.6px;line-height:7.6px;text-align:left;">W<sub>2</sub>= 24000 N</div><div class="t" style="left:229.50px;top:323.29px;width:300px;font-size:7.6px;line-height:7.6px;text-align:left;"><span class="lc">l</span>= 12000 <span class="lc">mm</span></div><div class="t" style="left:229.50px;top:332.79px;width:300px;font-size:7.6px;line-height:7.6px;text-align:left;"><span class="lc">h</span><sub>1</sub>= 6000 <span class="lc">m</span> <span class="lc">m</span></div><div class="t" style="left:229.50px;top:344.79px;width:300px;font-size:7.6px;line-height:7.6px;text-align:left;"><span class="lc">h</span><sub>2</sub>= 4000 <span class="lc">m</span> <span class="lc">m</span></div><div class="t" style="left:229.50px;top:356.29px;width:300px;font-size:7.6px;line-height:7.6px;text-align:left;"><span class="lc">f</span><sub><span class="lc">yd</span></sub>= 355 MP<span class="lc">a</span></div><div class="t" style="left:300.50px;top:304.09px;width:300px;font-size:7.6px;line-height:7.6px;text-align:left;">M<sub><span class="lc">p</span></sub></div><div class="t" style="left:325.00px;top:304.09px;width:300px;font-size:7.6px;line-height:7.6px;text-align:left;">(IPE 330)</div><div class="t" style="left:300.50px;top:313.59px;width:300px;font-size:7.6px;line-height:7.6px;text-align:left;">0,7M<sub><span class="lc">p</span></sub></div><div class="t" style="left:325.00px;top:313.59px;width:300px;font-size:7.6px;line-height:7.6px;text-align:left;">(IPE 300)</div><div class="t" style="left:300.50px;top:323.29px;width:300px;font-size:7.6px;line-height:7.6px;text-align:left;">0,6M<sub><span class="lc">p</span></sub></div><div class="t" style="left:325.00px;top:323.29px;width:300px;font-size:7.6px;line-height:7.6px;text-align:left;">(IPE 270)</div><div class="t" style="left:300.50px;top:332.79px;width:300px;font-size:7.6px;line-height:7.6px;text-align:left;">0,2M<sub><span class="lc">p</span></sub></div><div class="t" style="left:325.00px;top:332.79px;width:300px;font-size:7.6px;line-height:7.6px;text-align:left;">(IPE 180)</div><div class="t" style="left:289.00px;top:319.09px;width:300px;font-size:7.6px;line-height:7.6px;text-align:center;">0,99</div><div class="t" style="left:341.50px;top:319.09px;width:300px;font-size:7.6px;line-height:7.6px;text-align:center;">1,02</div><div class="t" style="left:392.50px;top:319.09px;width:300px;font-size:7.6px;line-height:7.6px;text-align:center;">3,13</div><div class="t" style="left:229.50px;top:366.79px;width:300px;font-size:7.6px;line-height:7.6px;text-align:left;"><span class="lc">per</span> <span class="lc">i</span> <span class="lc">carichi</span> <span class="lc">vedi</span> <span class="lc">il</span></div><div class="t" style="left:229.50px;top:376.79px;width:300px;font-size:7.6px;line-height:7.6px;text-align:left;"><span class="lc">paragrafo</span> 3.2.7</div><div class="t" style="left:300.50px;top:386.49px;width:300px;font-size:7.6px;line-height:7.6px;text-align:left;">IPE 450</div><div class="t" style="left:300.50px;top:396.29px;width:300px;font-size:7.6px;line-height:7.6px;text-align:left;">IPE 500</div><div class="t" style="left:289.00px;top:391.69px;width:300px;font-size:7.6px;line-height:7.6px;text-align:center;">1,602</div><div class="t" style="left:341.50px;top:391.69px;width:300px;font-size:7.6px;line-height:7.6px;text-align:center;">1,52</div><div class="t" style="left:392.50px;top:391.69px;width:300px;font-size:7.6px;line-height:7.6px;text-align:center;">5,1</div>
<div class="rt" style="transform:translate(604px,28.4px) rotate(90deg);letter-spacing:0.74px;-webkit-text-stroke:0.3px #f4f4f4;">Risultati ottenuti dai vari test effettuati</div>
</body></html>
